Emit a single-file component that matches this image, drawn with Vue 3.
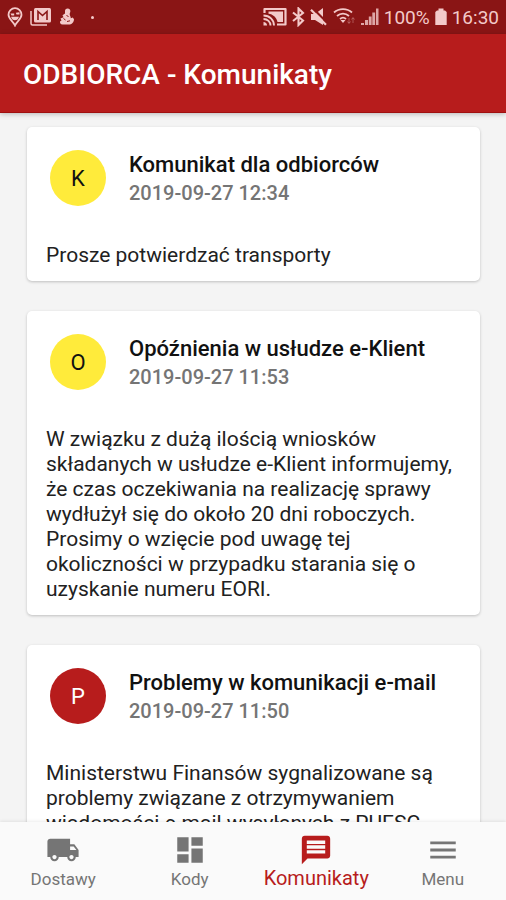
<script setup>
import { ref } from 'vue'

const messages = [
  {
    initial: 'K',
    tone: 'yellow',
    title: 'Komunikat dla odbiorców',
    date: '2019-09-27 12:34',
    body: 'Prosze potwierdzać transporty',
  },
  {
    initial: 'O',
    tone: 'yellow',
    title: 'Opóźnienia w usłudze e-Klient',
    date: '2019-09-27 11:53',
    body: 'W związku z dużą ilością wniosków składanych w usłudze e-Klient informujemy, że czas oczekiwania na realizację sprawy wydłużył się do około 20 dni roboczych. Prosimy o wzięcie pod uwagę tej okoliczności w przypadku starania się o uzyskanie numeru EORI.',
  },
  {
    initial: 'P',
    tone: 'red',
    title: 'Problemy w komunikacji e-mail',
    date: '2019-09-27 11:50',
    body: 'Ministerstwu Finansów sygnalizowane są problemy związane z otrzymywaniem wiadomości e-mail wysyłanych z PUESC.',
  },
]

const tabs = [
  {
    id: 'dostawy',
    label: 'Dostawy',
    icon: 'M20 8h-3V4H3c-1.1 0-2 .9-2 2v11h2c0 1.66 1.34 3 3 3s3-1.34 3-3h6c0 1.66 1.34 3 3 3s3-1.34 3-3h2v-5l-3-4zM6 18.5c-.83 0-1.5-.67-1.5-1.5s.67-1.5 1.5-1.5 1.5.67 1.5 1.5-.67 1.5-1.5 1.5zm13.5-9l1.96 2.5H17V9.5h2.5zm-1.5 9c-.83 0-1.5-.67-1.5-1.5s.67-1.5 1.5-1.5 1.5.67 1.5 1.5-.67 1.5-1.5 1.5z',
  },
  { id: 'kody', label: 'Kody', icon: 'M3 13h8V3H3v10zm0 8h8v-6H3v6zm10 0h8V11h-8v10zm0-18v6h8V3h-8z' },
  {
    id: 'komunikaty',
    label: 'Komunikaty',
    icon: 'M4 2h16c1.1 0 2 .9 2 2v12c0 1.1-.9 2-2 2H6l-4 4V4c0-1.1.9-2 2-2zm1.500 3.300v2.400h13V5.300zm0 3.400v2.400h13V8.700zm0 3.400v2.400h13v-2.400z',
  },
  { id: 'menu', label: 'Menu', icon: 'M3 18h18v-2H3v2zm0-5h18v-2H3v2zm0-7v2h18V6H3z' },
]

const active = ref('komunikaty')
</script>

<template>
  <div class="app">
    <div class="status">
      <div class="status-group left">
        <svg width="16" height="20" viewBox="0 0 16 20">
          <path d="M8 1.200a6.500 6.500 0 0 0-6.500 6.500C1.500 12 6 14 8 18.500 10 14 14.500 12 14.500 7.700A6.500 6.500 0 0 0 8 1.200z" fill="none" stroke="currentColor" stroke-width="1.800" />
          <path d="M3.500 6.500h3.700v2H4.500zM8.800 5.800l3.700-.6v2.300H9.500zM4 9.800h8c-.8 2.500-2 3.500-4 3.500S4.800 12.300 4 9.800z" fill="currentColor" />
        </svg>
        <svg width="22" height="20" viewBox="0 0 22 20">
          <path d="M1 4v12.500c0 1 .6 1.500 1.500 1.500H17" fill="none" stroke="currentColor" stroke-width="1.500" />
          <rect x="4" y="1" width="17" height="14.500" rx="1.500" fill="currentColor" />
          <path d="M8 13V4.500l4.500 4 4.500-4V13" fill="none" stroke="#8a1515" stroke-width="1.600" />
        </svg>
        <svg width="16" height="20" viewBox="0 0 16 20">
          <path d="M8.500 1.500c2.200 0 3.200 1.500 2.800 3.200-.2 1.200-.9 1.800-.5 3 .4 1.300 1 2 1 3.500l2-.8 1.200 1.800c0 3-2.200 5.300-5.400 5.300H3.500C1.500 17.500.8 16 1 14.500l1.500-1-1-2 3-1.300-1-2L6 6.500V4c0-1.500 1-2.500 2.500-2.500z" fill="currentColor" />
          <path d="M4.500 11.500l2 1.500M7.500 8.500l2 1M8 14.500l3-.7" stroke="#8a1515" stroke-width="1" />
        </svg>
        <span class="dot"></span>
      </div>
      <div class="status-group right">
        <svg width="24" height="20" viewBox="0 0 24 20">
          <path d="M1.500 6V2h21v15.500H14" fill="none" stroke="currentColor" stroke-width="2.200" stroke-linejoin="round" />
          <path d="M5.500 4.500h14.500V15h-5.500C13.500 10.500 10 7.300 5.500 6.800z" fill="currentColor" />
          <path d="M.5 8.500c6 0 10.500 4.300 10.500 10M.5 12c4 0 7 2.800 7 6.500" fill="none" stroke="currentColor" stroke-width="1.900" />
          <path d="M.5 15C2.500 15 4 16.500 4 18.500H.5z" fill="currentColor" />
        </svg>
        <svg width="13" height="20" viewBox="0 0 13 20">
          <path d="M1 5.500l10 8L6.500 18V1.500L11 6 1 14" fill="none" stroke="currentColor" stroke-width="2.100" />
        </svg>
        <svg width="18" height="20" viewBox="0 0 18 20">
          <path d="M1 7h4l8-6v17l-8-5H1z" fill="currentColor" />
          <path d="M3 1.500L18 16.500" stroke="#8a1515" stroke-width="2.200" />
          <path d="M1 2.800L16 17.800" stroke="currentColor" stroke-width="2.200" />
        </svg>
        <svg width="23" height="20" viewBox="0 0 23 20">
          <path d="M1 5.500c5-4.500 13-4.500 18 0M4 9c3.500-3.200 8.500-3.200 12 0M7 12c2-1.800 4-1.800 6 0" fill="none" stroke="currentColor" stroke-width="1.800" />
          <path d="M7.500 13h5L10 16z" fill="currentColor" />
          <path d="M16 11v5m-1.500-1.500L16 16.500l1.500-2M20 16v-5m-1.500 1.500L20 10.500l1.500 2" fill="none" stroke="currentColor" stroke-width="1" opacity=".35" />
        </svg>
        <svg width="18" height="20" viewBox="0 0 18 20">
          <path d="M0 16h3v2H0zM4 13h3v5H4zM7.800 9.500h2.800V18H7.800zM11.300 5.500h2.800V18h-2.800zM15 1.500h2.500V18H15z" fill="currentColor" opacity=".8" />
        </svg>
        <span>100%</span>
        <svg width="12" height="20" viewBox="0 0 12 20">
          <path d="M3.500 1.500h5v2H10l1.700 1.500v13H.3V5L2 3.500h1.500z" fill="currentColor" />
        </svg>
        <span>16:30</span>
      </div>
    </div>

    <header class="toolbar">
      <h1>ODBIORCA - Komunikaty</h1>
    </header>

    <main class="feed">
      <article v-for="m in messages" :key="m.date" class="card">
        <div class="card-head">
          <span class="avatar" :class="m.tone">{{ m.initial }}</span>
          <div>
            <h2>{{ m.title }}</h2>
            <time>{{ m.date }}</time>
          </div>
        </div>
        <p>{{ m.body }}</p>
      </article>
    </main>

    <nav class="tabs">
      <button
        v-for="t in tabs"
        :key="t.id"
        type="button"
        :class="{ active: active === t.id }"
        @click="active = t.id"
      >
        <svg width="34" height="34" viewBox="0 0 24 24"><path :d="t.icon" fill="currentColor" fill-rule="evenodd" /></svg>
        <span>{{ t.label }}</span>
      </button>
    </nav>
  </div>
</template>

<style>
body {
  background: #f4f4f4;
}
</style>

<style scoped>
.app {
  display: flex;
  flex-direction: column;
  height: 100vh;
  font-family: Roboto, "Liberation Sans", sans-serif;
  color: #212121;
}
.status {
  display: flex;
  flex: none;
  justify-content: space-between;
  align-items: center;
  height: 34px;
  padding: 0 7px;
  background: #8a1515;
  color: #f3c9c9;
  font-size: 19px;
}
.status-group {
  display: flex;
  align-items: center;
}
.left {
  gap: 7px;
}
.dot {
  width: 3px;
  height: 3px;
  margin-left: 9px;
  border-radius: 50%;
  background: currentColor;
}
.right {
  gap: 5px;
}
.toolbar {
  display: flex;
  flex: none;
  align-items: center;
  height: 79px;
  padding: 3px 23px 0;
  box-sizing: border-box;
  background: #b71c1c;
  border-bottom: 1px solid #a01010;
  box-shadow: 0 1px 5px rgba(0, 0, 0, 0.25);
  color: #fff;
  z-index: 1;
}
h1 {
  margin: 0;
  font-size: 28px;
  font-weight: 500;
}
.feed {
  display: flex;
  flex: 1;
  flex-direction: column;
  gap: 30px;
  min-height: 0;
  padding: 14px 26px 0 27px;
  overflow: hidden;
}
.card {
  flex: none;
  padding: 23px 19px 13px;
  border-radius: 5px;
  background: #fff;
  box-shadow: 0 1px 3px rgba(0, 0, 0, 0.22);
}
.card-head {
  display: flex;
  gap: 23px;
  padding-left: 4px;
}
.avatar {
  display: flex;
  flex: none;
  align-items: center;
  justify-content: center;
  width: 56px;
  height: 56px;
  border-radius: 50%;
  font-size: 22px;
}
.yellow {
  background: #ffeb3b;
  color: #111;
}
.red {
  background: #b71c1c;
  color: #fff;
}
h2 {
  margin: 0;
  color: #111;
  font-size: 22px;
  font-weight: 500;
  line-height: 29px;
}
time {
  display: block;
  color: #757575;
  font-size: 20px;
  font-weight: 500;
  line-height: 29px;
}
p {
  margin: 35px 0 0;
  font-size: 21px;
  line-height: 25px;
}
.tabs {
  display: flex;
  flex: none;
  height: 78px;
  background: #fafafa;
  box-shadow: 0 -1px 3px rgba(0, 0, 0, 0.08);
  z-index: 1;
}
.tabs button {
  display: flex;
  flex: 1 1 0;
  flex-direction: column;
  align-items: center;
  min-width: 0;
  padding: 11px 0 0;
  border: 0;
  background: none;
  color: #757575;
  font-family: inherit;
  font-size: 17px;
  line-height: 24px;
  cursor: pointer;
}
.tabs .active {
  color: #b71c1c;
  font-size: 20px;
  line-height: 22px;
}
</style>
